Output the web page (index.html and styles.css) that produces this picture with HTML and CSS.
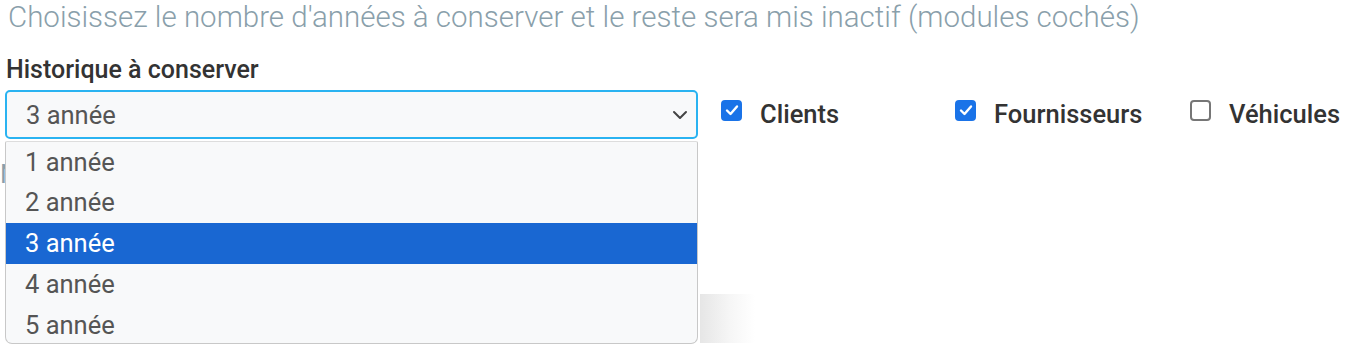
FILE: index.html
```html
<!DOCTYPE html>
<html lang="fr">
<head>
<meta charset="utf-8">
<link rel="stylesheet" href="styles.css">
</head>
<body>
<div class="page">
  <p class="intro">Choisissez le nombre d'années à conserver et le reste sera mis inactif (modules cochés)</p>
  <div class="field-row">
    <div class="group">
      <label class="group-label">Historique à conserver</label>
      <div class="select-wrap">
        <div class="select">
          <span class="select-value">3 année</span>
          <svg class="chevron" width="16" height="10" viewBox="0 0 16 10"><path d="M2 2 L8 8 L14 2" fill="none" stroke="#444" stroke-width="2" stroke-linecap="round" stroke-linejoin="round"/></svg>
        </div>
        <ul class="dropdown">
          <li class="option">1 année</li>
          <li class="option">2 année</li>
          <li class="option selected">3 année</li>
          <li class="option">4 année</li>
          <li class="option">5 année</li>
        </ul>
        <div class="under-shadow"></div>
      </div>
      <p class="hint">N</p>
    </div>
    <div class="checks">
      <label class="check"><span class="box checked"><svg width="14" height="12" viewBox="0 0 14 12"><path d="M2 6.5 L5.5 10 L12 2.5" fill="none" stroke="#fff" stroke-width="2.4" stroke-linecap="round" stroke-linejoin="round"/></svg></span>Clients</label>
      <label class="check"><span class="box checked"><svg width="14" height="12" viewBox="0 0 14 12"><path d="M2 6.5 L5.5 10 L12 2.5" fill="none" stroke="#fff" stroke-width="2.4" stroke-linecap="round" stroke-linejoin="round"/></svg></span>Fournisseurs</label>
      <label class="check"><span class="box"></span>Véhicules</label>
    </div>
  </div>
</div>
</body>
</html>
```
FILE: styles.css
```css
html, body {
  margin: 0;
  padding: 0;
  background: #fff;
}
body {
  font-family: Roboto, "Liberation Sans", sans-serif;
  width: 1347px;
  height: 353px;
  overflow: hidden;
}
.page {
  padding: 0 5px;
}
.intro {
  margin: 0;
  padding: 0 0 0 3px;
  font-size: 29.5px;
  font-weight: 300;
  color: #8a9fab;
  line-height: 34px;
  white-space: nowrap;
}
.field-row {
  display: flex;
  align-items: flex-start;
  margin-top: 20px;
}
.group {
  width: 693px;
  flex: none;
}
.group-label {
  display: block;
  padding-left: 1px;
  font-size: 25px;
  font-weight: 500;
  color: #333;
  line-height: 32px;
}
.select-wrap {
  position: relative;
  margin-top: 4px;
  z-index: 2;
}
.select {
  box-sizing: border-box;
  height: 49px;
  border: 2px solid #2ab3f1;
  border-radius: 5px;
  background: #f8f9fa;
  display: flex;
  align-items: center;
  justify-content: space-between;
  padding: 0 8px 0 19px;
}
.select-value {
  font-size: 25.5px;
  color: #555;
}
.chevron {
  display: block;
}
.dropdown {
  position: absolute;
  top: 51px;
  left: 0;
  width: 693px;
  box-sizing: border-box;
  margin: 0;
  padding: 0;
  list-style: none;
  background: #f8f9fa;
  border: 1px solid #c8c8c8;
  border-top-color: #ddd;
  border-radius: 2px 2px 7px 7px;
  overflow: hidden;
}
.option {
  height: 41px;
  line-height: 41px;
  padding-left: 19px;
  font-size: 25.5px;
  color: #555;
}
.option:first-child {
  height: 40px;
}
.option:last-child {
  height: 38px;
  line-height: 40px;
}
.option.selected {
  background: #1967d2;
  color: #fff;
}
.under-shadow {
  position: absolute;
  left: 695px;
  top: 204px;
  width: 55px;
  height: 49px;
  background: linear-gradient(to right, #e6e6e6, #f6f6f6 55%, #fff);
  z-index: -1;
}
.hint {
  margin: 20px 0 0 -5px;
  font-size: 26px;
  line-height: 30px;
  color: #8a9fab;
}
.checks {
  display: grid;
  grid-template-columns: 234px 235px auto;
  margin-left: 23px;
  margin-top: 44px;
}
.check {
  display: flex;
  align-items: center;
  font-size: 25.5px;
  font-weight: 500;
  color: #333;
  height: 32px;
}
.box {
  box-sizing: border-box;
  width: 21px;
  height: 21px;
  border: 2px solid #767676;
  border-radius: 4px;
  margin-right: 18px;
  margin-top: -8px;
  display: flex;
  align-items: center;
  justify-content: center;
  background: #fff;
  flex: none;
}
.box.checked {
  background: #1a73e8;
  border-color: #1a73e8;
}
```
